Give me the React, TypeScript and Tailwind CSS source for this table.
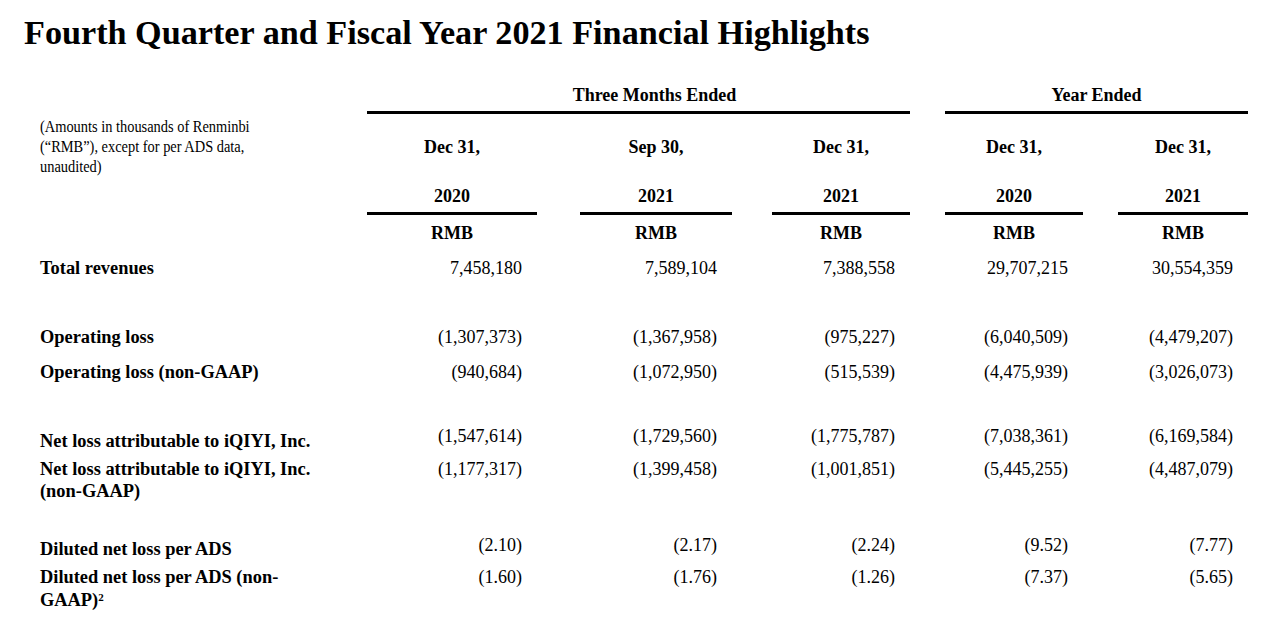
import React from "react";

const GRID =
  "grid grid-cols-[327px_170px_43px_152px_40px_138px_35px_138px_35px_130px]";

type RowProps = {
  label: React.ReactNode;
  values: string[];
  rowClass: string;
  labelClass?: string;
  numClass?: string;
};

function DataRow({ label, values, rowClass, labelClass = "", numClass = "" }: RowProps) {
  const cols = ["col-start-2", "col-start-4", "col-start-6", "col-start-8", "col-start-10"];
  return (
    <div className={`${GRID} ${rowClass} leading-[22px]`}>
      <div className={`col-start-1 row-start-1 font-bold text-[18.4px] ${labelClass}`}>{label}</div>
      {values.map((v, i) => (
        <div key={i} className={`${cols[i]} row-start-1 text-right pr-[15px] ${numClass}`}>
          {v}
        </div>
      ))}
    </div>
  );
}

export default function App() {
  return (
    <div
      className="w-[1274px] h-[629px] bg-white text-black overflow-hidden"
      style={{ fontFamily: '"Liberation Serif", "Times New Roman", serif' }}
    >
      <h1 className="pl-6 pt-[13px] text-[34.2px] leading-[40px] font-bold">
        Fourth Quarter and Fiscal Year 2021 Financial Highlights
      </h1>

      <div className="ml-10 mt-[27px] text-[18px]">
        {/* Header block */}
        <div className={`${GRID} grid-rows-[34px_66px_35px_37px] font-bold`}>
          <div className="col-start-2 col-span-5 row-start-1 border-b-[3px] border-black flex items-center justify-center pl-[32px]">
            Three Months Ended
          </div>
          <div className="col-start-8 col-span-3 row-start-1 border-b-[3px] border-black flex items-center justify-center">
            Year Ended
          </div>

          <div className="col-start-1 row-start-2 row-span-2 pt-[3px] font-normal text-[16px] leading-[20px] scale-x-[0.9] origin-left whitespace-nowrap">
            (Amounts in thousands of Renminbi
            <br />
            (“RMB”), except for per ADS data,
            <br />
            unaudited)
          </div>

          <div className="col-start-2 row-start-2 flex items-center justify-center">Dec 31,</div>
          <div className="col-start-4 row-start-2 flex items-center justify-center">Sep 30,</div>
          <div className="col-start-6 row-start-2 flex items-center justify-center">Dec 31,</div>
          <div className="col-start-8 row-start-2 flex items-center justify-center">Dec 31,</div>
          <div className="col-start-10 row-start-2 flex items-center justify-center">Dec 31,</div>

          <div className="col-start-2 row-start-3 border-b-[3px] border-black flex items-center justify-center">2020</div>
          <div className="col-start-4 row-start-3 border-b-[3px] border-black flex items-center justify-center">2021</div>
          <div className="col-start-6 row-start-3 border-b-[3px] border-black flex items-center justify-center">2021</div>
          <div className="col-start-8 row-start-3 border-b-[3px] border-black flex items-center justify-center">2020</div>
          <div className="col-start-10 row-start-3 border-b-[3px] border-black flex items-center justify-center">2021</div>

          <div className="col-start-2 row-start-4 flex items-center justify-center">RMB</div>
          <div className="col-start-4 row-start-4 flex items-center justify-center">RMB</div>
          <div className="col-start-6 row-start-4 flex items-center justify-center">RMB</div>
          <div className="col-start-8 row-start-4 flex items-center justify-center">RMB</div>
          <div className="col-start-10 row-start-4 flex items-center justify-center">RMB</div>
        </div>

        <DataRow
          rowClass="mt-[5px]"
          label="Total revenues"
          values={["7,458,180", "7,589,104", "7,388,558", "29,707,215", "30,554,359"]}
        />
        <DataRow
          rowClass="mt-[47px]"
          label="Operating loss"
          values={["(1,307,373)", "(1,367,958)", "(975,227)", "(6,040,509)", "(4,479,207)"]}
        />
        <DataRow
          rowClass="mt-[13px]"
          label="Operating loss (non-GAAP)"
          values={["(940,684)", "(1,072,950)", "(515,539)", "(4,475,939)", "(3,026,073)"]}
        />
        <DataRow
          rowClass="mt-[42px]"
          labelClass="pt-[5px]"
          label="Net loss attributable to iQIYI, Inc."
          values={["(1,547,614)", "(1,729,560)", "(1,775,787)", "(7,038,361)", "(6,169,584)"]}
        />
        <DataRow
          rowClass="mt-[6px]"
          label={
            <>
              Net loss attributable to iQIYI, Inc.
              <br />
              (non-GAAP)
            </>
          }
          values={["(1,177,317)", "(1,399,458)", "(1,001,851)", "(5,445,255)", "(4,487,079)"]}
        />
        <DataRow
          rowClass="mt-[32px]"
          labelClass="pt-[4px]"
          label="Diluted net loss per ADS"
          values={["(2.10)", "(2.17)", "(2.24)", "(9.52)", "(7.77)"]}
        />
        <DataRow
          rowClass="mt-[6px]"
          labelClass="leading-[23px]"
          label={
            <>
              Diluted net loss per ADS (non-
              <br />
              GAAP)<sup className="text-[11px]">2</sup>
            </>
          }
          values={["(1.60)", "(1.76)", "(1.26)", "(7.37)", "(5.65)"]}
        />
      </div>
    </div>
  );
}
